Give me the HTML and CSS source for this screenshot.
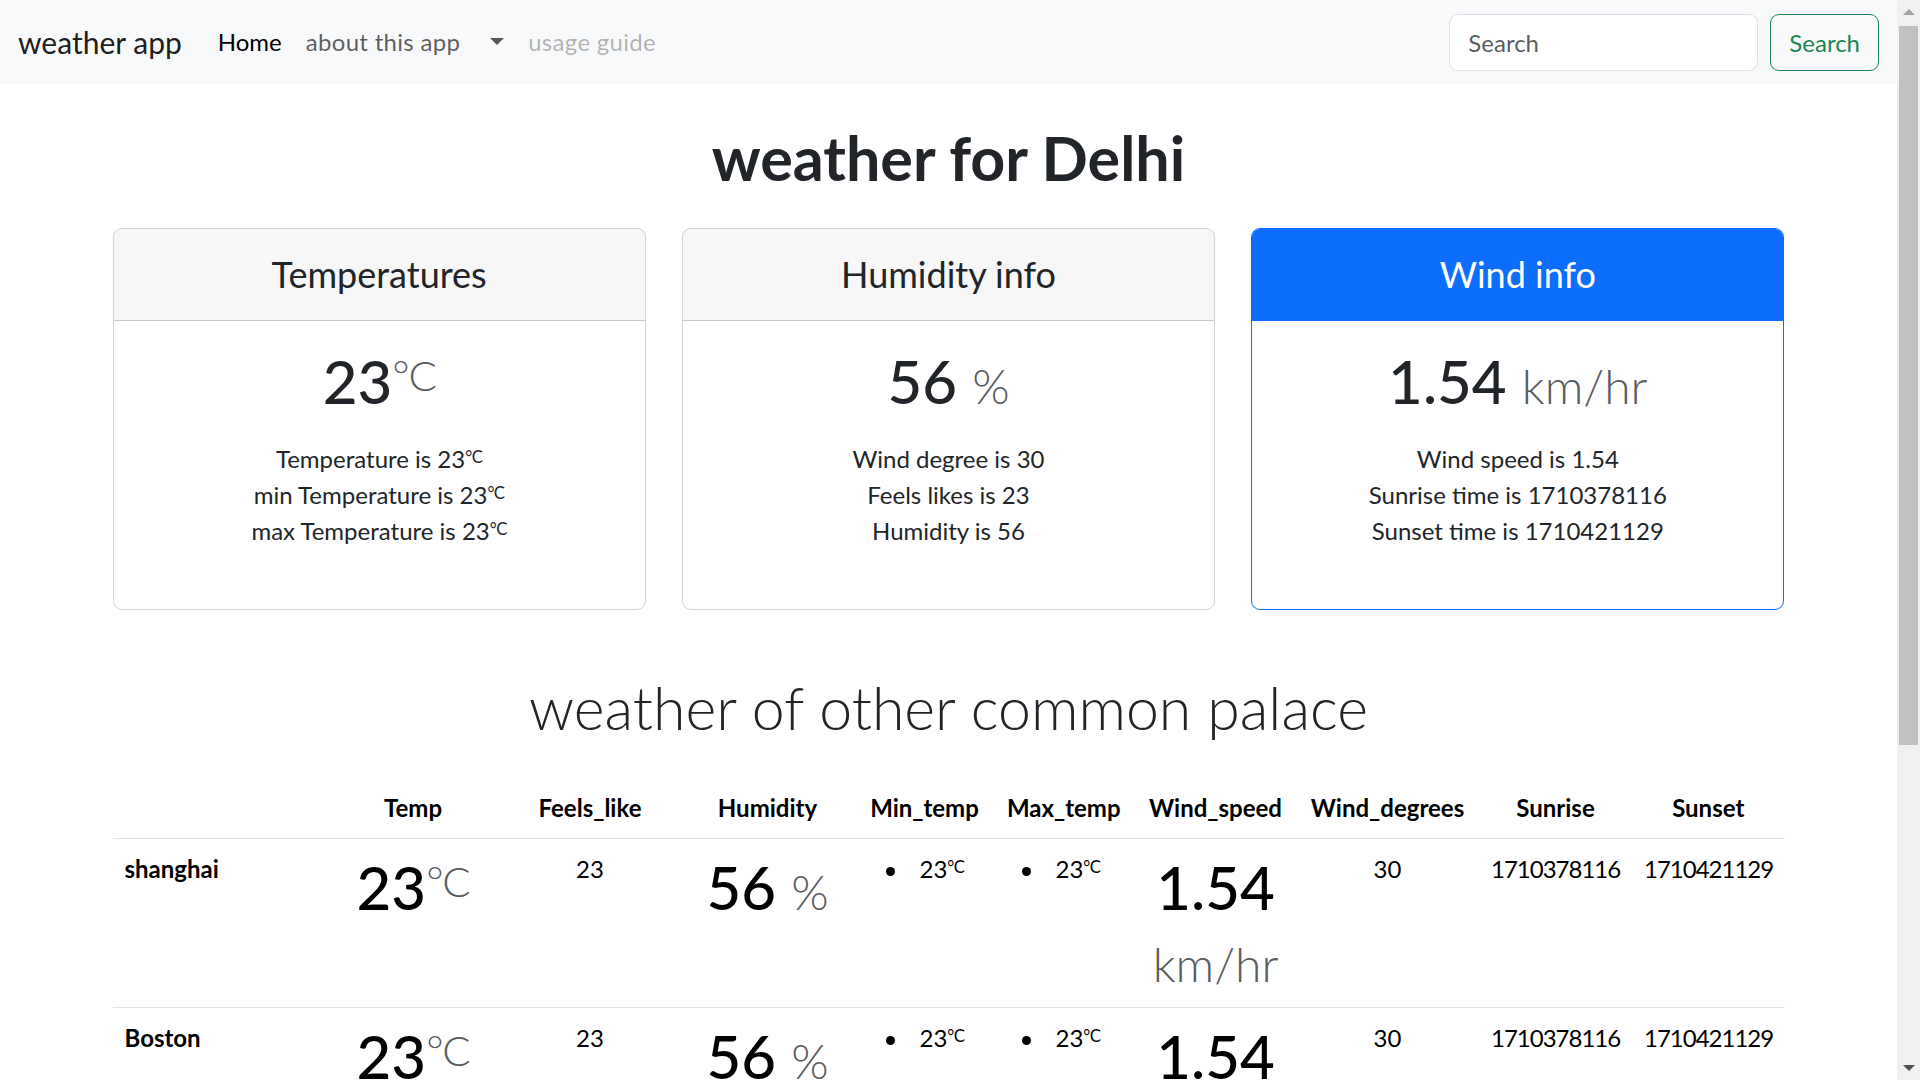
FILE: index.html
```html
<!DOCTYPE html>
<html lang="en">
<head>
<meta charset="utf-8">
<title>weather app</title>
<link rel="stylesheet" href="styles.css">
</head>
<body>
<div class="page">
  <div class="viewport">
    <nav class="navbar">
      <div class="nav-left">
        <a class="brand" href="#">weather app</a>
        <ul class="nav">
          <li><a class="nav-link active" href="#">Home</a></li>
          <li><a class="nav-link" href="#">about this app</a></li>
          <li><a class="nav-link dropdown-toggle" href="#"></a></li>
          <li><a class="nav-link disabled" href="#">usage guide</a></li>
        </ul>
      </div>
      <form class="search">
        <input class="search-input" type="search" placeholder="Search">
        <button class="search-btn" type="button">Search</button>
      </form>
    </nav>

    <main class="container">
      <h1 class="title">weather for Delhi</h1>

      <div class="cards">
        <div class="card">
          <div class="card-header"><h4 class="card-heading">Temperatures</h4></div>
          <div class="card-body">
            <h1 class="card-value">23<sup class="deg muted">°C</sup></h1>
            <ul class="facts">
              <li>Temperature is 23<sup class="deg">°C</sup></li>
              <li>min Temperature is 23<sup class="deg">°C</sup></li>
              <li>max Temperature is 23<sup class="deg">°C</sup></li>
            </ul>
          </div>
        </div>
        <div class="card">
          <div class="card-header"><h4 class="card-heading">Humidity info</h4></div>
          <div class="card-body">
            <h1 class="card-value">56 <small class="unit">%</small></h1>
            <ul class="facts">
              <li>Wind degree is 30</li>
              <li>Feels likes is 23</li>
              <li>Humidity is 56</li>
            </ul>
          </div>
        </div>
        <div class="card card-primary">
          <div class="card-header"><h4 class="card-heading">Wind info</h4></div>
          <div class="card-body">
            <h1 class="card-value">1.54 <small class="unit">km/hr</small></h1>
            <ul class="facts">
              <li>Wind speed is 1.54</li>
              <li>Sunrise time is 1710378116</li>
              <li>Sunset time is 1710421129</li>
            </ul>
          </div>
        </div>
      </div>

      <h1 class="subtitle">weather of other common palace</h1>

      <table class="table">
        <colgroup>
          <col class="c-city"><col class="c-temp"><col class="c-feels"><col class="c-hum">
          <col class="c-min"><col class="c-max"><col class="c-wind"><col class="c-deg">
          <col class="c-rise"><col class="c-set">
        </colgroup>
        <thead>
          <tr>
            <th class="row-head"></th>
            <th>Temp</th>
            <th>Feels_like</th>
            <th>Humidity</th>
            <th>Min_temp</th>
            <th>Max_temp</th>
            <th>Wind_speed</th>
            <th>Wind_degrees</th>
            <th>Sunrise</th>
            <th>Sunset</th>
          </tr>
        </thead>
        <tbody>
          <tr>
            <th class="row-head">shanghai</th>
            <td><div class="big">23<sup class="deg muted">°C</sup></div></td>
            <td>23</td>
            <td><div class="big">56 <small class="unit">%</small></div></td>
            <td><ul class="bullets"><li>23<sup class="deg">°C</sup></li></ul></td>
            <td><ul class="bullets"><li>23<sup class="deg">°C</sup></li></ul></td>
            <td><div class="big">1.54 <small class="unit">km/hr</small></div></td>
            <td>30</td>
            <td class="num">1710378116</td>
            <td class="num">1710421129</td>
          </tr>
          <tr>
            <th class="row-head">Boston</th>
            <td><div class="big">23<sup class="deg muted">°C</sup></div></td>
            <td>23</td>
            <td><div class="big">56 <small class="unit">%</small></div></td>
            <td><ul class="bullets"><li>23<sup class="deg">°C</sup></li></ul></td>
            <td><ul class="bullets"><li>23<sup class="deg">°C</sup></li></ul></td>
            <td><div class="big">1.54 <small class="unit">km/hr</small></div></td>
            <td>30</td>
            <td class="num">1710378116</td>
            <td class="num">1710421129</td>
          </tr>
        </tbody>
      </table>
    </main>
  </div>

  <div class="scrollbar">
    <div class="sb-btn"><span class="sb-up"></span></div>
    <div class="sb-thumb"></div>
    <div class="sb-fill"></div>
    <div class="sb-btn"><span class="sb-down"></span></div>
  </div>
</div>
</body>
</html>
```

FILE: styles.css
```css
* { box-sizing: border-box; }

html, body {
  margin: 0;
  height: 100%;
  overflow: hidden;
}

body {
  font-family: Lato, "Noto Sans", "Liberation Sans", sans-serif;
  font-size: 24px;
  line-height: 1.5;
  color: #212529;
  background: #fff;
}

.page {
  display: flex;
  height: 1080px;
}

.viewport {
  flex: 1;
  min-width: 0;
  overflow: hidden;
}

/* ---------- navbar ---------- */
.navbar {
  height: 84px;
  background: #f8f9fa;
  display: flex;
  align-items: center;
  justify-content: space-between;
  padding: 0 18px;
}

.nav-left {
  display: flex;
  align-items: center;
}

.brand {
  font-size: 30px;
  line-height: 45px;
  color: rgba(0, 0, 0, .9);
  margin-right: 24px;
  text-decoration: none;
}

.nav {
  display: flex;
  list-style: none;
  margin: 0;
  padding: 0;
}

.nav-link {
  display: block;
  padding: 12px;
  line-height: 36px;
  letter-spacing: .3px;
  color: rgba(0, 0, 0, .65);
  text-decoration: none;
}

.nav-link.active { color: #000; letter-spacing: 0; }
.nav-link.disabled { color: rgba(0, 0, 0, .3); }

.dropdown-toggle::after {
  content: "";
  display: inline-block;
  margin-left: 6px;
  vertical-align: 6px;
  border-top: 7px solid;
  border-left: 7px solid transparent;
  border-right: 7px solid transparent;
}

.search {
  display: flex;
  margin: 0;
}

.search-input {
  width: 309px;
  height: 57px;
  padding: 9px 18px;
  font-family: inherit;
  font-size: 24px;
  line-height: 36px;
  color: #212529;
  background: #fff;
  border: 1px solid #dee2e6;
  border-radius: 9px;
  margin-right: 12px;
  outline: none;
}

.search-input::placeholder { color: rgba(33, 37, 41, .75); }

.search-btn {
  height: 57px;
  padding: 0 18px;
  font-family: inherit;
  font-size: 24px;
  color: #198754;
  background: transparent;
  border: 1px solid #198754;
  border-radius: 9px;
}

/* ---------- main ---------- */
.container {
  width: 1708px;
  margin: 0 auto;
  padding: 0 18px;
}

.title {
  margin: 38px 0 34px;
  font-size: 61px;
  line-height: 72px;
  font-weight: 700;
  text-align: center;
}

.cards {
  display: grid;
  grid-template-columns: repeat(3, 1fr);
  gap: 36px;
  text-align: center;
}

.card {
  border: 1px solid rgba(0, 0, 0, .175);
  border-radius: 9px;
  overflow: hidden;
  background: #fff;
}

.card-header {
  padding: 24px;
  background: rgba(0, 0, 0, .03);
  border-bottom: 1px solid rgba(0, 0, 0, .175);
}

.card-heading {
  margin: 0;
  font-size: 36px;
  line-height: 43px;
  font-weight: 400;
}

.card-primary { border-color: #0d6efd; }
.card-primary .card-header {
  background: #0d6efd;
  border-bottom-color: #0d6efd;
  color: #fff;
}

.card-body { padding: 24px; }

.card-value {
  margin: 0 0 24px;
  font-size: 60px;
  line-height: 72px;
  font-weight: 500;
}

.deg {
  font-size: .7em;
  line-height: 0;
  letter-spacing: -.03em;
  vertical-align: baseline;
  position: relative;
  top: -0.32em;
}

.muted {
  color: #595c5f;
  font-weight: 300;
}

.unit {
  font-size: .8em;
  line-height: 1;
  font-weight: 300;
  color: #595c5f;
}

.facts {
  list-style: none;
  margin: 0 0 36px;
  padding: 0;
  line-height: 36px;
}

.subtitle {
  margin: 62px 0 34px;
  font-size: 59px;
  line-height: 72px;
  font-weight: 300;
  text-align: center;
}

/* ---------- table ---------- */
.table {
  width: 100%;
  border-collapse: collapse;
  table-layout: fixed;
  color: #000;
  line-height: 36px;
}

.c-city { width: 212px; }
.c-temp { width: 177px; }
.c-feels { width: 177px; }
.c-hum { width: 178px; }
.c-min { width: 136px; }
.c-max { width: 142.5px; }
.c-wind { width: 161px; }
.c-deg { width: 183px; }
.c-rise { width: 153px; }
.c-set { width: 152.5px; }

.table th,
.table td {
  padding: 12px;
  border-bottom: 1px solid #dee2e6;
  vertical-align: top;
  text-align: center;
  white-space: nowrap;
}

.table th { font-weight: 700; }
.table td .big { white-space: normal; }
.table td.num { letter-spacing: -1px; }

.table .row-head { text-align: left; }

.big {
  font-size: 60px;
  line-height: 72px;
  font-weight: 500;
}

.bullets {
  margin: 0;
  padding-left: 51px;
  text-align: left;
  list-style: none;
}

.bullets li::before {
  content: "";
  display: inline-block;
  width: 9px;
  height: 9px;
  border-radius: 50%;
  background: #000;
  margin-left: -34px;
  margin-right: 25px;
  vertical-align: middle;
}

/* ---------- fake scrollbar ---------- */
.scrollbar {
  width: 23px;
  flex: none;
  background: #f1f1f1;
  display: flex;
  flex-direction: column;
  align-items: center;
}

.sb-btn {
  width: 100%;
  height: 24px;
  display: flex;
  align-items: center;
  justify-content: center;
  flex: none;
}

.sb-up {
  width: 0;
  height: 0;
  border-left: 6px solid transparent;
  border-right: 6px solid transparent;
  border-bottom: 6px solid #a3a3a3;
}

.sb-down {
  width: 0;
  height: 0;
  border-left: 6px solid transparent;
  border-right: 6px solid transparent;
  border-top: 6px solid #505050;
}

.sb-thumb {
  width: 19px;
  height: 719px;
  margin-top: 2px;
  background: #c1c1c1;
  flex: none;
}

.sb-fill { flex: 1; }
```
